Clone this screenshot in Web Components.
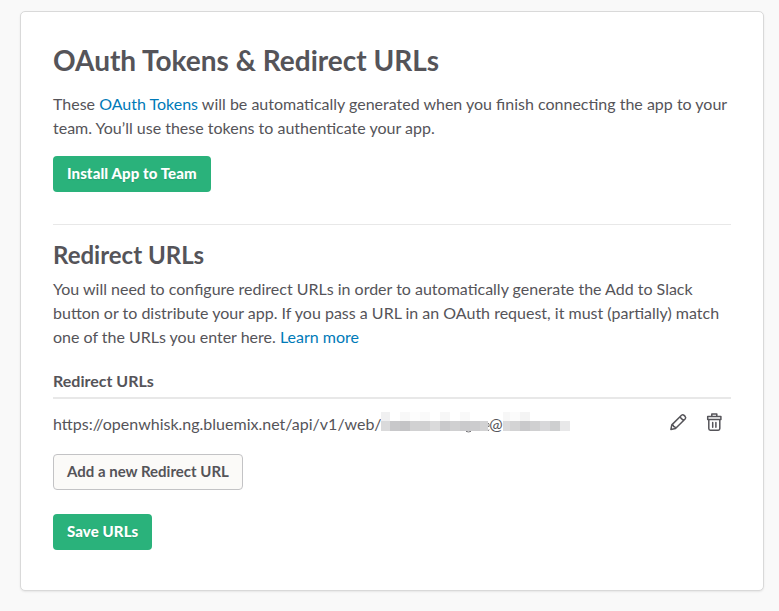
<!DOCTYPE html>
<html lang="en"><head><meta charset="utf-8"><title>OAuth Tokens &amp; Redirect URLs</title>
<style>
html,body{margin:0;height:100%}
body{background:#f9f9f9;color:#555459;font:400 16px/24px Lato,"Liberation Sans",sans-serif;overflow:hidden;padding:11px 15px 0 20px;box-sizing:border-box;-webkit-font-smoothing:antialiased}
</style></head><body>
<oauth-page></oauth-page>
<script>
const define=(name,html)=>customElements.define(name,class extends HTMLElement{
  constructor(){super();this.attachShadow({mode:'open'}).innerHTML=html;}
});
define('settings-card',`<style>:host{display:block;box-sizing:border-box;height:580px;padding:31px 32px;background:#fff;border:1px solid #d9d9d9;border-radius:5px;box-shadow:0 1px 2px rgba(0,0,0,.08)}</style><slot></slot>`);
define('action-button',`<style>:host{display:block;width:max-content}
button{display:block;box-sizing:border-box;height:36px;margin:0;padding:0 14px;border:0;border-radius:4px;background:#2ab27b;color:#fff;font:900 15px/34px Lato,"Liberation Sans",sans-serif;letter-spacing:.1px;text-shadow:0 1px 1px rgba(0,0,0,.1);white-space:nowrap;padding-bottom:2px}
:host([outline]) button{background:#fbfaf8;border:1px solid #c3c3c5;color:#555459;padding:0 13px 2px;line-height:32px;letter-spacing:0;text-shadow:none;font-weight:700}</style><button type="button"><slot></slot></button>`);
define('text-link',`<style>:host{display:inline}a{color:#007ab8;text-decoration:none}</style><a href="#"><slot></slot></a>`);
customElements.define('mosaic-strip',class extends HTMLElement{
  constructor(){super();this.attachShadow({mode:'open'});}
  connectedCallback(){
    const rows=['top','base'].map(n=>this.getAttribute(n).split(' '));
    const w=+this.getAttribute('width'),first=+this.getAttribute('first');
    let r='';
    rows.forEach((cells,j)=>cells.forEach((c,i)=>{
      const x=i?first+(i-1)*10:0,x2=Math.min(w,first+i*10);
      r+=`<rect x="${x}" y="${j*9}" width="${x2-x}" height="${j?10:9}" fill="#${c}"/>`;
    }));
    const tail=this.hasAttribute('tail')?`<path d="M85 19.400Q87.500 20.500 90 19.400M${w+.3} 11Q${w+1.300} 12 ${w+1.100} 14.500H${w}M${w} 18.600L${w+1.300} 17.800" fill="none" stroke="#77767a" stroke-width="1" shape-rendering="auto"/>`:'';
    this.shadowRoot.innerHTML=`<style>:host{display:block}svg{display:block;overflow:visible}</style><svg width="${w}" height="19" shape-rendering="crispEdges">${r}${tail}</svg>`;
  }
});
define('edit-icon',`<style>:host{display:block}svg{display:block}</style><svg width="20" height="20" viewBox="0 0 20 20" fill="none" stroke="#555459" stroke-width="1.5" stroke-linejoin="round" stroke-linecap="round"><path d="M2.900 17.400 3.800 12.900 13.500 3.300Q14.800 2.200 16.100 3.400L17.100 4.400Q18.300 5.700 17.100 7L7.500 16.500ZM4 13Q5.500 12.900 5.700 14.600Q7.400 14.800 7.500 16.400M11.900 5l3.600 3.600"/></svg>`);
define('trash-icon',`<style>:host{display:block}svg{display:block}</style><svg width="20" height="20" viewBox="0 0 20 20" fill="none" stroke="#555459" stroke-width="1.500" stroke-linejoin="round" stroke-linecap="round"><path d="M7.800 4V2h5V4M3.700 4.400h13.200v3H3.700ZM4.800 7.600v9Q4.800 18.200 6.300 18.200h8q1.500 0 1.500-1.600v-9M8.700 10.500v4.700M11.900 10.500v4.700"/></svg>`);
define('url-row',`<style>:host{display:flex;height:55px;box-sizing:border-box;padding-top:13px;align-items:flex-start}
.url{display:flex;flex:1;white-space:nowrap}.tools{display:flex;gap:16px;padding-right:7px}</style><div class="url"><slot></slot></div><div class="tools"><edit-icon></edit-icon><trash-icon></trash-icon></div>`);
define('oauth-page',`<style>:host{display:block}h1,h2,h3,p{margin:0}
h1{font-size:28px;line-height:34px;font-weight:700}
.intro{margin:15px 0 16px}
hr{height:1px;border:0;margin:32px 0 14px;background:#e8e8e8}
h2{font-size:24px;line-height:32px;font-weight:700;margin-bottom:6px}
h3{font-size:16px;line-height:24px;font-weight:700;margin-top:20px;padding-bottom:4px;border-bottom:2px solid #e8e8e8}
action-button+action-button{margin-top:24px}
.path{width:328px}.at{margin-left:1px;width:14px;text-align:center}</style>
<settings-card><h1>OAuth Tokens &amp; Redirect URLs</h1>
<p class="intro">These <text-link>OAuth Tokens</text-link> will be automatically generated when you finish connecting the app to your<br>team. You’ll use these tokens to authenticate your app.</p>
<action-button>Install App to Team</action-button><hr>
<h2>Redirect URLs</h2>
<p>You will need to configure redirect URLs in order to automatically generate the Add to Slack<br>button or to distribute your app. If you pass a URL in an OAuth request, it must (partially) match<br>one of the URLs you enter here. <text-link>Learn more</text-link></p>
<h3>Redirect URLs</h3>
<url-row><span class="path">https://openwhisk.ng.bluemix.net/api/v1/web/</span><mosaic-strip tail width="107" first="9" top="f0f0f1 ffffff f8f8f8 fdfdfd fafafa ffffff f7f7f7 ffffff f9f9f9 ffffff ffffff" base="dadadb c8c8ca c4c4c6 d1d1d2 d0d0d1 dadadb c9c9cb d0d0d1 cacacc ccccce d2d2d3"></mosaic-strip><span class="at">@</span><mosaic-strip width="67" first="7" top="f7f7f7 fbfbfb f4f4f4 ffffff ffffff ffffff ffffff" base="dadadb d3d3d4 c9c9cb d0d0d1 d8d8da cecfd0 e8e8e9"></mosaic-strip></url-row>
<action-button outline>Add a new Redirect URL</action-button><action-button>Save URLs</action-button></settings-card>`);
</script></body></html>
